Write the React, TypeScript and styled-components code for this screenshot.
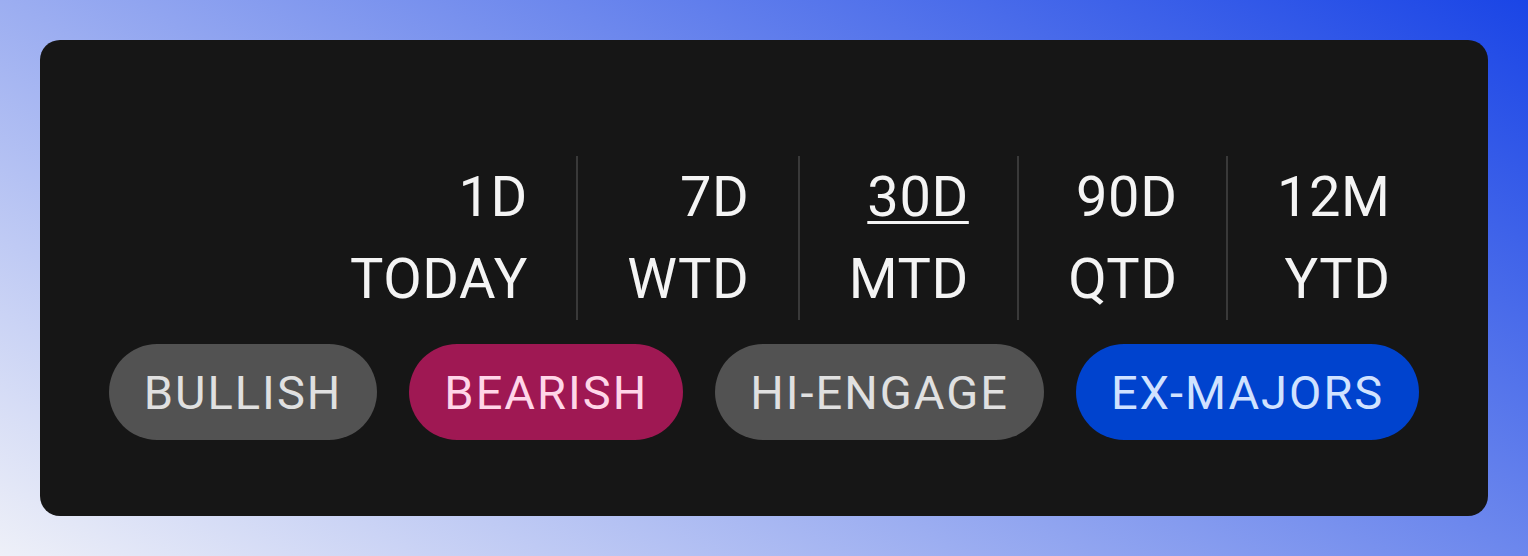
import React from "react";
import styled, { createGlobalStyle } from "styled-components";

const Global = createGlobalStyle`
  html, body { margin: 0; padding: 0; }
  body {
    width: 1528px;
    height: 556px;
    overflow: hidden;
    background: linear-gradient(30deg, #eef0f8 0%, #1a45e6 100%);
    font-family: Roboto, "Noto Sans", sans-serif;
  }
`;

const Page = styled.div`
  box-sizing: border-box;
  width: 1528px;
  height: 556px;
  padding: 40px;
`;

const Card = styled.div`
  box-sizing: border-box;
  height: 476px;
  background: #161616;
  border-radius: 20px;
  padding: 116px 49px 0 49px;
  display: flex;
  flex-direction: column;
`;

const Periods = styled.div`
  display: flex;
  justify-content: flex-end;
`;

const Column = styled.div<{ $first?: boolean }>`
  display: flex;
  flex-direction: column;
  align-items: flex-end;
  padding: 0 49px 0 49px;
  border-left: 2px solid ${(p) => (p.$first ? "transparent" : "#393939")};
`;

const Label = styled.span<{ $active?: boolean }>`
  display: block;
  font-size: 56px;
  line-height: 82px;
  font-weight: 400;
  color: #f4f4f4;
  letter-spacing: 0.6px;
  margin-right: -0.6px;
  text-decoration: ${(p) => (p.$active ? "underline" : "none")};
  text-decoration-thickness: 3px;
  text-underline-offset: 5px;
`;

const Chips = styled.div`
  display: flex;
  justify-content: center;
  gap: 32px;
  margin-top: 24px;
`;

const tones = {
  neutral: { bg: "#525252", fg: "#e0e0e0" },
  bearish: { bg: "#9f1853", fg: "#ffd6e8" },
  blue: { bg: "#0043ce", fg: "#d0e2ff" },
};

const Chip = styled.div<{ $tone: keyof typeof tones }>`
  height: 96px;
  padding: 0 35px;
  border-radius: 48px;
  display: flex;
  align-items: center;
  background: ${(p) => tones[p.$tone].bg};
  color: ${(p) => tones[p.$tone].fg};
  font-size: 47px;
  letter-spacing: 2px;
  font-weight: 400;
`;

const periods = [
  { top: "1D", bottom: "TODAY" },
  { top: "7D", bottom: "WTD" },
  { top: "30D", bottom: "MTD", active: true },
  { top: "90D", bottom: "QTD" },
  { top: "12M", bottom: "YTD" },
];

const chips: { label: string; tone: keyof typeof tones }[] = [
  { label: "BULLISH", tone: "neutral" },
  { label: "BEARISH", tone: "bearish" },
  { label: "HI-ENGAGE", tone: "neutral" },
  { label: "EX-MAJORS", tone: "blue" },
];

export default function App() {
  return (
    <>
      <Global />
      <Page>
        <Card>
          <Periods>
            {periods.map((p, i) => (
              <Column key={p.top} $first={i === 0}>
                <Label $active={p.active}>{p.top}</Label>
                <Label>{p.bottom}</Label>
              </Column>
            ))}
          </Periods>
          <Chips>
            {chips.map((c) => (
              <Chip key={c.label} $tone={c.tone}>
                {c.label}
              </Chip>
            ))}
          </Chips>
        </Card>
      </Page>
    </>
  );
}
